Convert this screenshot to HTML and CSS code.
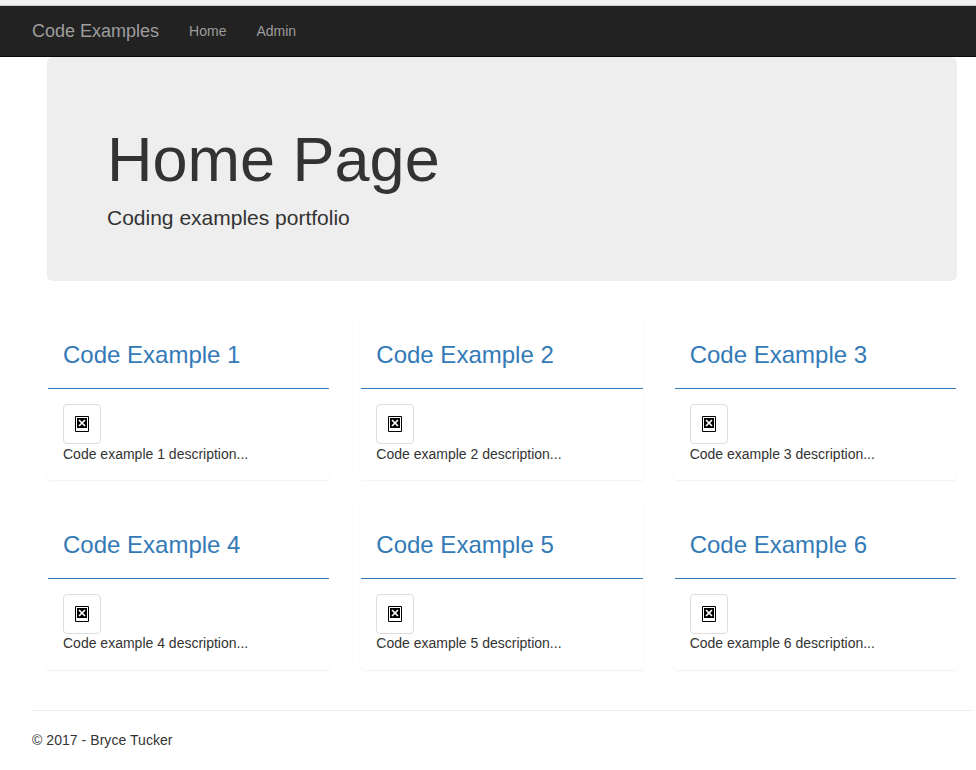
FILE: index.html
```html
<!DOCTYPE html>
<html lang="en">
<head>
<meta charset="utf-8">
<title>Home Page</title>
<link rel="stylesheet" href="styles.css">
</head>
<body>
<svg class="defs" width="0" height="0" aria-hidden="true">
  <symbol id="missing" viewBox="0 0 14 16">
    <path fill="#fff" d="M0 0h14v16H0z"/>
    <path fill="none" stroke="#000" d="M.5 .5h13v15H.5z"/>
    <path fill="#000" d="M2 2h10v10H2z"/>
    <path fill="none" stroke="#fff" stroke-width="1.7" d="M4 4l6 6M10 4l-6 6"/>
  </symbol>
</svg>
<div class="strip"></div>
<nav class="navbar">
  <a class="brand">Code Examples</a>
  <a class="link">Home</a>
  <a class="link">Admin</a>
</nav>
<div class="container">
  <main class="content">
    <header class="jumbotron">
      <h1>Home Page</h1>
      <p>Coding examples portfolio</p>
    </header>
    <div class="cards">
      <section class="card"><div class="heading"><h3>Code Example 1</h3></div><div class="body"><div class="thumb"><svg><use href="#missing"/></svg></div><p>Code example 1 description...</p></div></section>
      <section class="card"><div class="heading"><h3>Code Example 2</h3></div><div class="body"><div class="thumb"><svg><use href="#missing"/></svg></div><p>Code example 2 description...</p></div></section>
      <section class="card"><div class="heading"><h3>Code Example 3</h3></div><div class="body"><div class="thumb"><svg><use href="#missing"/></svg></div><p>Code example 3 description...</p></div></section>
      <section class="card"><div class="heading"><h3>Code Example 4</h3></div><div class="body"><div class="thumb"><svg><use href="#missing"/></svg></div><p>Code example 4 description...</p></div></section>
      <section class="card"><div class="heading"><h3>Code Example 5</h3></div><div class="body"><div class="thumb"><svg><use href="#missing"/></svg></div><p>Code example 5 description...</p></div></section>
      <section class="card"><div class="heading"><h3>Code Example 6</h3></div><div class="body"><div class="thumb"><svg><use href="#missing"/></svg></div><p>Code example 6 description...</p></div></section>
    </div>
  </main>
  <footer class="footer">© 2017 - Bryce Tucker</footer>
</div>
</body>
</html>
```
FILE: styles.css
```css
* { box-sizing: border-box; }
body {
  margin: 0;
  background: #fff;
  color: #333;
  font: 14px/20px "Liberation Sans", Arial, sans-serif;
  overflow: hidden;
}
h1, h3, p { margin: 0; font-weight: 400; }
.defs { display: block; }
.strip { height: 6px; background: #f0f0f0; border-bottom: 1px solid #c8d0cb; }
.navbar {
  display: flex;
  align-items: center;
  height: 51px;
  padding-left: 32px;
  background: #222;
  border-bottom: 1px solid #080808;
  color: #9d9d9d;
}
.brand { font-size: 18px; margin-right: 15px; }
.link { padding: 0 15px; }
.container { width: 940px; margin-left: 32px; }
.content { padding: 0 15px; }
.jumbotron {
  height: 224px;
  padding: 68px 60px 0;
  background: #eee;
  border-radius: 6px;
}
.jumbotron h1 { font-size: 63px; line-height: 69.3px; margin-bottom: 9px; }
.jumbotron p { font-size: 21px; line-height: 29.4px; }
.cards {
  display: grid;
  grid-template-columns: repeat(3, 1fr);
  gap: 20px 30px;
  margin-top: 30px;
}
.card {
  border: 1px solid transparent;
  border-radius: 4px;
  box-shadow: 0 1px 2px rgba(0, 0, 0, .06);
}
.heading { padding: 30px 15px 20px; border-bottom: 1px solid #337ab7; color: #337ab7; }
.heading h3 { font-size: 24px; line-height: 26.4px; }
.body { padding: 15px; }
.card:nth-child(n+4) .heading { padding-top: 31px; padding-bottom: 19px; }
.card:nth-child(n+4) .body p { margin: -1px 0 1px; }
.thumb {
  display: flex;
  align-items: center;
  justify-content: center;
  width: 38px;
  height: 40px;
  border: 1px solid #ddd;
  border-radius: 4px;
}
.thumb svg { width: 14px; height: 16px; }
.footer { margin-top: 40px; padding-top: 19px; border-top: 1px solid #eee; letter-spacing: .05px; }
```
